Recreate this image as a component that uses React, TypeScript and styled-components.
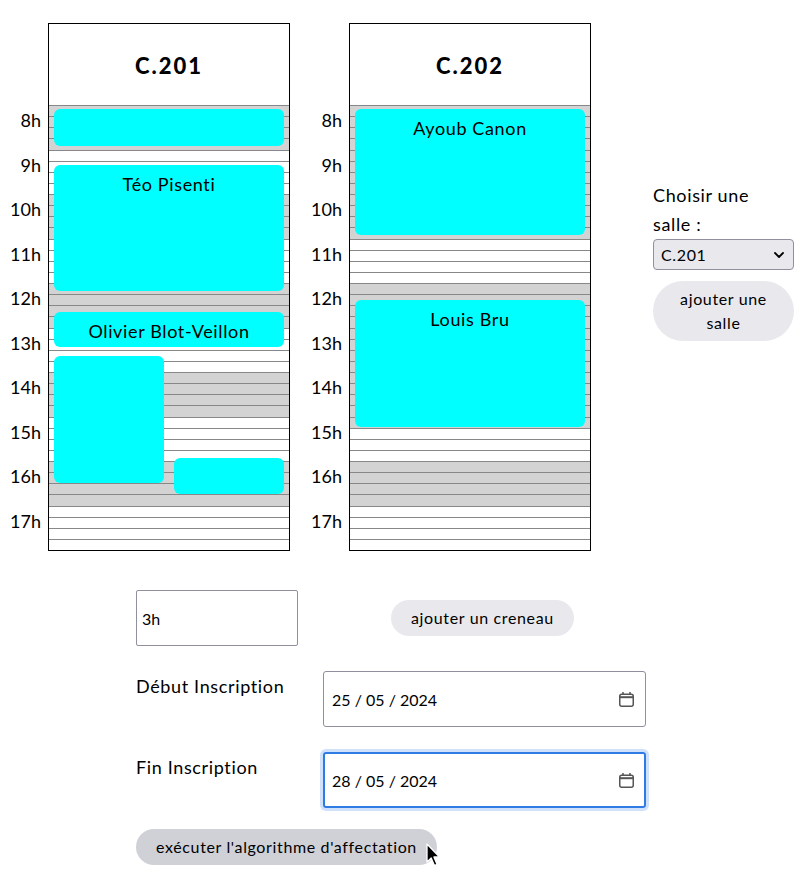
import React from 'react';
import styled, { createGlobalStyle, css } from 'styled-components';

const HOUR_PX = 44.5;
const FIRST_HOUR = 8;
const HOURS = 10;
const SLOTS_PER_HOUR = 4;

const GlobalStyle = createGlobalStyle`
  body {
    margin: 8px 0 8px 8px;
    background: #fff;
    color: #000;
    font-family: Lato, "Liberation Sans", sans-serif;
    letter-spacing: 0.04em;
  }
  * { box-sizing: border-box; }
`;

const Page = styled.div`
  padding-top: 15px;
`;

const TopRow = styled.div`
  display: flex;
  align-items: flex-start;
`;

const Calendar = styled.div`
  display: flex;
  gap: 19px;
  flex-shrink: 0;
`;

const RoomGroup = styled.div`
  display: flex;
`;

const HourColumn = styled.div`
  width: 33px;
  margin-right: 7px;
  padding-top: 82px;
  display: flex;
  flex-direction: column;
`;

const HourLabel = styled.div`
  height: ${HOUR_PX}px;
  font-size: 18px;
  line-height: 30px;
  text-align: right;
  letter-spacing: 0;
`;

const RoomBox = styled.div`
  width: 242px;
  border: 1px solid #000;
`;

const RoomHeader = styled.div`
  height: 81px;
  display: flex;
  align-items: center;
  justify-content: center;
  font-size: 22px;
  font-weight: 900;
  letter-spacing: 2px;
  padding-top: 2px;
`;

const Grid = styled.div`
  position: relative;
  height: ${HOUR_PX * HOURS}px;
  display: flex;
  flex-direction: column;
`;

const Slot = styled.div<{ $busy: boolean }>`
  flex: 1;
  border-top: 1px solid #888;
  background: ${p => (p.$busy ? '#d3d3d3' : '#fff')};
`;

const Event = styled.div<{ $half?: 'left' | 'right' }>`
  position: absolute;
  background: #00ffff;
  border-radius: 6px;
  padding-top: 8px;
  font-size: 18px;
  line-height: 22px;
  text-align: center;
  ${p =>
    p.$half === 'left'
      ? css`left: 5px; width: calc(50% - 10px);`
      : p.$half === 'right'
      ? css`left: calc(50% + 5px); right: 5px;`
      : css`left: 5px; right: 5px;`}
`;

const SidePanel = styled.div`
  width: 141px;
  flex-shrink: 0;
  margin-left: 62px;
  margin-top: 158px;
  display: flex;
  flex-direction: column;
`;

const SideLabel = styled.div`
  max-width: 120px;
  font-size: 18px;
  line-height: 29px;
`;

const SelectBox = styled.div`
  height: 31px;
  display: flex;
  align-items: center;
  justify-content: space-between;
  padding: 0 8px 0 7px;
  background: #e9e9ed;
  border: 1px solid #8f8f9d;
  border-radius: 4px;
  font-size: 16px;
`;

const PillButton = styled.button<{ $pressed?: boolean }>`
  font-family: inherit;
  letter-spacing: 0.04em;
  font-size: 16px;
  line-height: 24px;
  color: #000;
  border: none;
  background: ${p => (p.$pressed ? '#d0d0d7' : '#e9e9ed')};
  border-radius: 999px;
  padding: 6px 20px;
  position: relative;
`;

const Form = styled.div`
  margin-top: 39px;
  padding-left: 128px;
  display: flex;
  flex-direction: column;
`;

const FormRow = styled.div<{ $gap?: number; $center?: boolean }>`
  display: flex;
  align-items: ${p => (p.$center ? 'center' : 'flex-start')};
  margin-top: ${p => p.$gap ?? 0}px;
`;

const DurationInput = styled.input`
  width: 162px;
  height: 56px;
  border: 1px solid #8f8f9d;
  border-radius: 2px;
  padding: 0 5px;
  font-family: inherit;
  font-size: 16px;
  letter-spacing: 0;
  margin-right: 93px;
`;

const FieldLabel = styled.div`
  width: 187px;
  font-size: 18px;
  line-height: 22px;
  padding-top: 4px;
`;

const DateBox = styled.div<{ $focused?: boolean }>`
  width: 323px;
  height: 56px;
  display: flex;
  align-items: center;
  justify-content: space-between;
  padding: 0 10px 0 8px;
  font-size: 16px;
  letter-spacing: 0;
  border-radius: 3px;
  ${p =>
    p.$focused
      ? css`
          border: 2px solid #2f7be4;
          padding-left: 7px;
          padding-right: 9px;
          box-shadow: 0 0 0 3px rgba(120, 170, 245, 0.35);
        `
      : css`border: 1px solid #8f8f9d;`}
`;

const Cursor = styled.svg`
  position: absolute;
  left: 290px;
  top: 14px;
`;

type Ev = { start: number; end: number; name?: string; half?: 'left' | 'right' };

type Room = { name: string; busy: [number, number][]; events: Ev[] };

const rooms: Room[] = [
  {
    name: 'C.201',
    busy: [[8, 9], [10, 11], [12, 13], [14, 15], [16, 17]],
    events: [
      { start: 8, end: 9 },
      { start: 9.25, end: 12.28, name: 'Téo Pisenti' },
      { start: 12.56, end: 13.53, name: 'Olivier Blot-Veillon' },
      { start: 13.55, end: 16.58, half: 'left' },
      { start: 15.84, end: 16.83, half: 'right' },
    ],
  },
  {
    name: 'C.202',
    busy: [[8, 11], [12, 15.25], [16, 17]],
    events: [
      { start: 8, end: 11.02, name: 'Ayoub Canon' },
      { start: 12.3, end: 15.33, name: 'Louis Bru' },
    ],
  },
];

const CalendarIcon = () => (
  <svg width="17" height="17" viewBox="0 0 17 17" fill="none" stroke="#555" strokeWidth="1.5">
    <rect x="1.75" y="3.25" width="13.5" height="12" rx="2" />
    <line x1="1.75" y1="6.2" x2="15.25" y2="6.2" strokeWidth="2" />
    <line x1="5" y1="1" x2="5" y2="4" />
    <line x1="12" y1="1" x2="12" y2="4" />
  </svg>
);

const Chevron = () => (
  <svg width="12" height="8" viewBox="0 0 12 8" fill="none" stroke="#000" strokeWidth="1.8" strokeLinecap="round" strokeLinejoin="round">
    <path d="M2 2l4 4 4-4" />
  </svg>
);

const RoomColumn = ({ room }: { room: Room }) => {
  const slots = Array.from({ length: HOURS * SLOTS_PER_HOUR }, (_, i) => FIRST_HOUR + i / SLOTS_PER_HOUR);
  return (
    <RoomGroup>
      <HourColumn>
        {Array.from({ length: HOURS }, (_, i) => (
          <HourLabel key={i}>{`${FIRST_HOUR + i}h`}</HourLabel>
        ))}
      </HourColumn>
      <RoomBox>
        <RoomHeader>{room.name}</RoomHeader>
        <Grid>
          {slots.map(t => (
            <Slot key={t} $busy={room.busy.some(([a, b]) => t >= a && t < b)} />
          ))}
          {room.events.map((ev, i) => (
            <Event
              key={i}
              $half={ev.half}
              style={{
                top: (ev.start - FIRST_HOUR) * HOUR_PX + 4,
                height: (ev.end - ev.start) * HOUR_PX - 8,
              }}
            >
              {ev.name}
            </Event>
          ))}
        </Grid>
      </RoomBox>
    </RoomGroup>
  );
};

export default function App() {
  return (
    <Page>
      <GlobalStyle />
      <TopRow>
        <Calendar>
          {rooms.map(r => (
            <RoomColumn key={r.name} room={r} />
          ))}
        </Calendar>
        <SidePanel>
          <SideLabel>Choisir une salle :</SideLabel>
          <SelectBox>
            <span>C.201</span>
            <Chevron />
          </SelectBox>
          <PillButton style={{ marginTop: 11 }}>ajouter une salle</PillButton>
        </SidePanel>
      </TopRow>

      <Form>
        <FormRow $center>
          <DurationInput defaultValue="3h" />
          <PillButton>ajouter un creneau</PillButton>
        </FormRow>
        <FormRow $gap={25}>
          <FieldLabel>Début Inscription</FieldLabel>
          <DateBox>
            <span>25 / 05 / 2024</span>
            <CalendarIcon />
          </DateBox>
        </FormRow>
        <FormRow $gap={25}>
          <FieldLabel>Fin Inscription</FieldLabel>
          <DateBox $focused>
            <span>28 / 05 / 2024</span>
            <CalendarIcon />
          </DateBox>
        </FormRow>
        <FormRow $gap={21}>
          <PillButton $pressed>
            exécuter l'algorithme d'affectation
            <Cursor width="16" height="26" viewBox="0 0 16 26">
              <path d="M1 1 L1 19 L5.2 15 L8.4 22.5 L11 21.3 L7.9 14 L13.5 14 Z" fill="#000" stroke="#fff" strokeWidth="1.3" strokeLinejoin="round" />
            </Cursor>
          </PillButton>
        </FormRow>
      </Form>
    </Page>
  );
}
